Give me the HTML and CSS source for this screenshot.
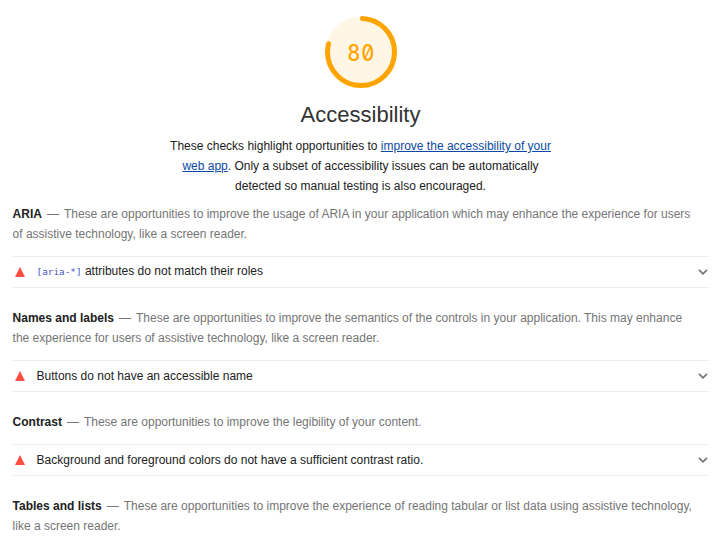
FILE: index.html
```
<!DOCTYPE html>
<html lang="en">
<head>
<meta charset="utf-8">
<title>Accessibility</title>
<link rel="stylesheet" href="styles.css">
</head>
<body>
<header class="summary">
  <div class="gauge">
    <svg class="gauge-ring" viewBox="0 0 72 72" aria-hidden="true">
      <circle class="gauge-base" cx="36" cy="36" r="35.5"/>
      <circle class="gauge-arc" cx="36" cy="36" r="33.5" pathLength="100"/>
    </svg>
    <span class="gauge-score">80</span>
  </div>
  <h1 class="title">Accessibility</h1>
  <p class="intro">These checks highlight opportunities to <a href="#">improve the accessibility of your<br>web app</a>. Only a subset of accessibility issues can be automatically<br>detected so manual testing is also encouraged.</p>
</header>
<main>
  <section class="group">
    <p class="group-text"><b>ARIA</b><span class="dash">—</span>These are opportunities to improve the usage of ARIA in your application which may enhance the experience for users<br>of assistive technology, like a screen reader.</p>
    <div class="audit"><i class="fail"></i><span class="audit-title with-code"><code>[aria-*]</code> attributes do not match their roles</span><svg class="chevron" viewBox="0 0 10 6"><path d="M1 .8 5 4.8 9 .8"/></svg></div>
  </section>
  <section class="group">
    <p class="group-text"><b>Names and labels</b><span class="dash">—</span>These are opportunities to improve the semantics of the controls in your application. This may enhance<br>the experience for users of assistive technology, like a screen reader.</p>
    <div class="audit"><i class="fail"></i><span class="audit-title">Buttons do not have an accessible name</span><svg class="chevron" viewBox="0 0 10 6"><path d="M1 .8 5 4.8 9 .8"/></svg></div>
  </section>
  <section class="group">
    <p class="group-text"><b>Contrast</b><span class="dash">—</span>These are opportunities to improve the legibility of your content.</p>
    <div class="audit"><i class="fail"></i><span class="audit-title">Background and foreground colors do not have a sufficient contrast ratio.</span><svg class="chevron" viewBox="0 0 10 6"><path d="M1 .8 5 4.8 9 .8"/></svg></div>
  </section>
  <section class="group">
    <p class="group-text"><b>Tables and lists</b><span class="dash">—</span>These are opportunities to improve the experience of reading tabular or list data using assistive technology,<br>like a screen reader.</p>
  </section>
</main>
</body>
</html>
```
FILE: styles.css
```
body { margin: 0; height: 537px; overflow: hidden; background: #fff; color: #212121; font: 12px/20px "Liberation Sans", Arial, sans-serif; }
p { margin: 0; white-space: nowrap; }
.summary { display: flex; flex-direction: column; align-items: center; padding: 16px 1px 0 0; }
.gauge { display: grid; width: 72px; height: 72px; margin-left: 1px; place-items: center; }
.gauge > * { grid-area: 1 / 1; }
.gauge-ring { width: 72px; height: 72px; }
.gauge-base { fill: #fff6e5; }
.gauge-arc { fill: none; stroke: #ffa400; stroke-width: 5; stroke-linecap: round; stroke-dasharray: 78.3 100; stroke-dashoffset: -.7; transform: rotate(-90deg); transform-origin: center; }
.gauge-score { padding: 1px 0 0 .5px; color: #ffa400; font: 500 23px/24px Inter, sans-serif; font-feature-settings: "zero" 1, "tnum" 1; letter-spacing: .8px; transform: scaleX(.88); }
.title { margin: 13px 0 7px; color: #333; font-size: 22px; line-height: 28px; font-weight: 400; }
.intro { text-align: center; }
.intro a { color: #0b4aa2; }
main { padding: 8px 13px 0 12.6px; }
.group-text { color: #757575; }
.group-text b { color: #212121; }
.dash { margin: 0 5px; }
.group { margin-bottom: 20px; }
.audit { display: flex; align-items: center; box-sizing: border-box; height: 32px; margin-top: 12px; border: solid #ebebeb; border-width: 1px 0; }
.fail { width: 0; margin-left: 2.4px; border: solid transparent; border-width: 0 5px 10px; border-bottom-color: #ff4e42; }
.audit-title { flex: 1; margin-left: 11.6px; }
.with-code { padding-bottom: 2px; }
.audit code { color: #3f51c5; font: 9.35px "DejaVu Sans Mono", monospace; }
.chevron { width: 10px; height: 6px; margin-right: 1px; fill: none; stroke: #757575; stroke-width: 1.7; }
```
